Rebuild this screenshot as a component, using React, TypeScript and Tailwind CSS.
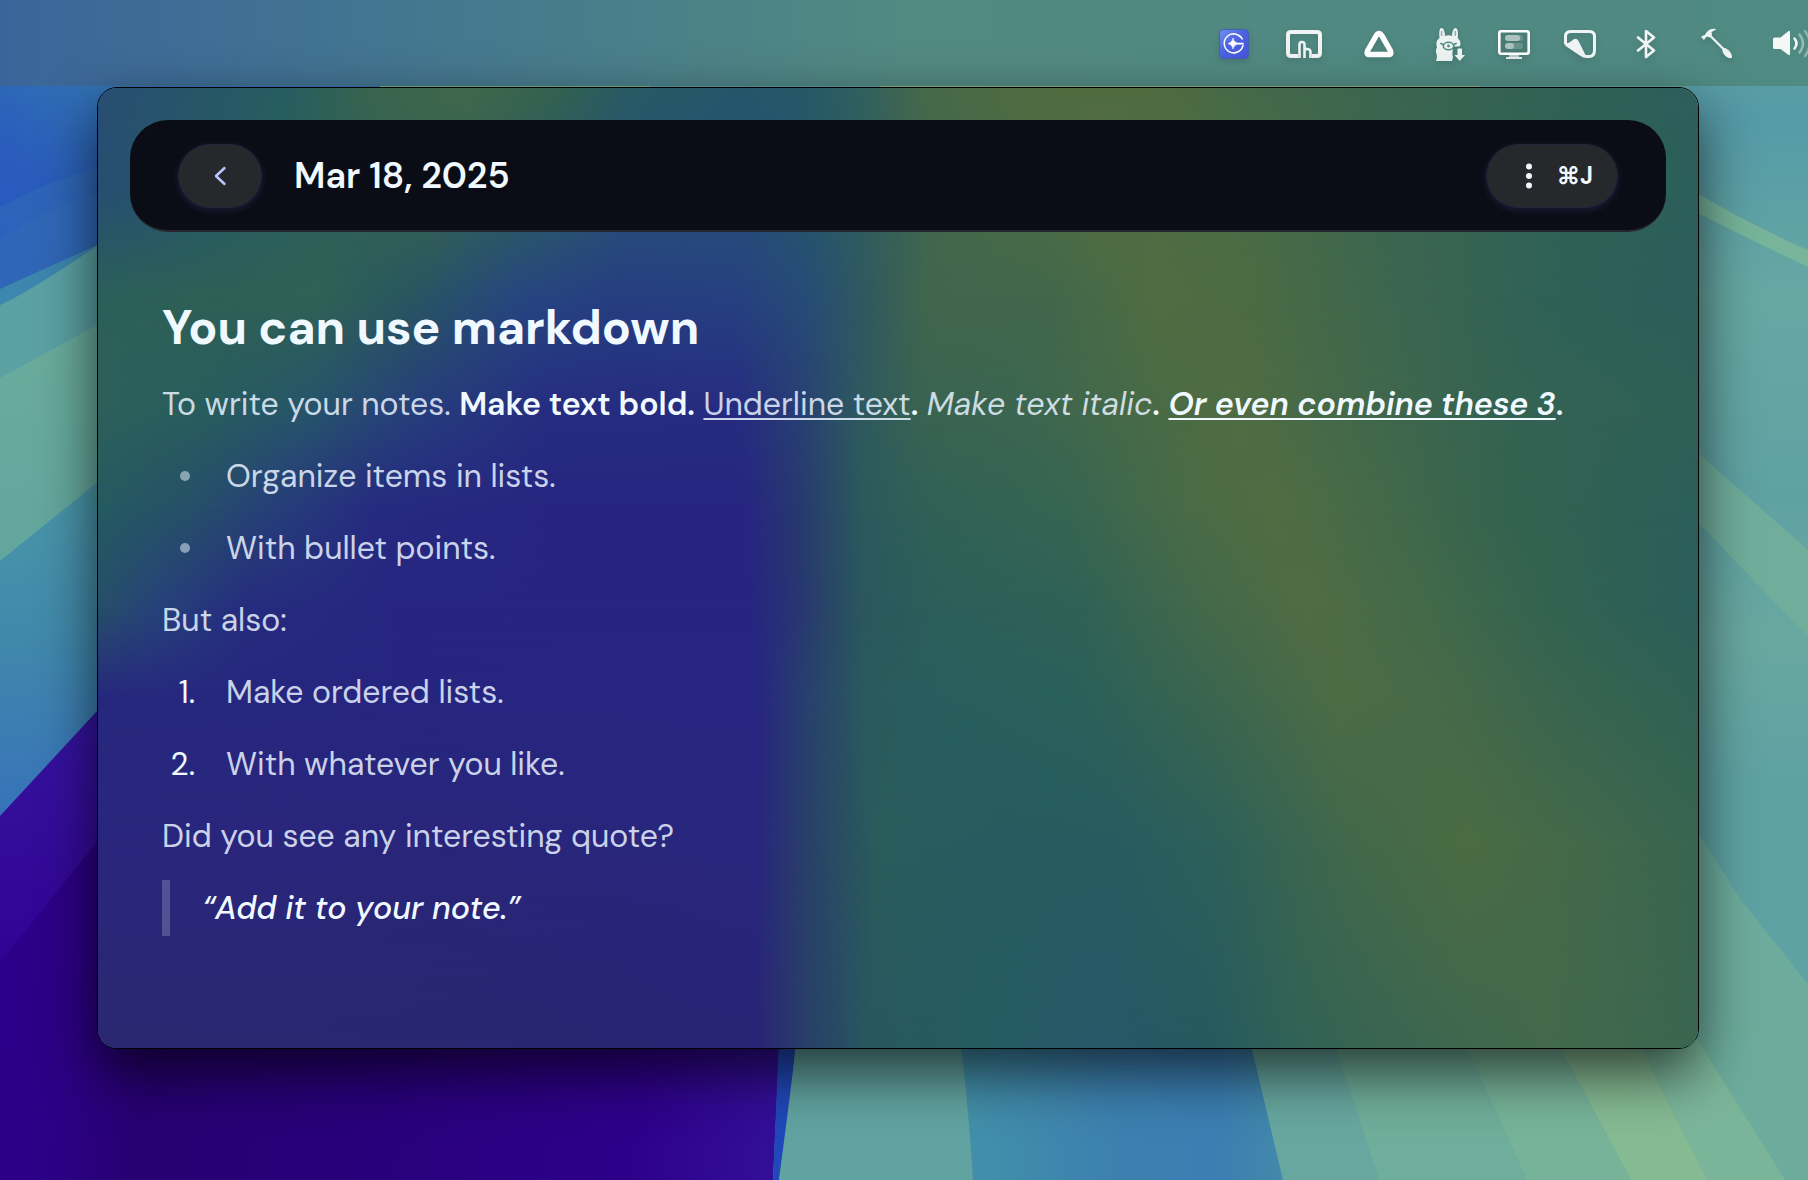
import React from "react";

type Stop = [number, string];

/* Colour rows of the frosted note window, blended across its width and height. */
const FROST: { y: number; stops: Stop[] }[] = [
  { y: 0, stops: [[0, "#284e74"], [100, "#275668"], [190, "#275d60"], [270, "#38644f"], [370, "#40684b"], [450, "#34624f"], [530, "#285a63"], [640, "#25566a"], [700, "#255868"], [760, "#2f5f60"], [830, "#47694a"], [950, "#506c40"], [1060, "#506c40"], [1160, "#44694a"], [1300, "#3a6550"], [1500, "#2f6055"], [1602, "#2d5f5c"]] },
  { y: 110, stops: [[0, "#274f70"], [100, "#265866"], [200, "#2b605b"], [330, "#366252"], [430, "#2c5b60"], [530, "#27507a"], [650, "#264e78"], [720, "#265668"], [780, "#335f5a"], [850, "#44684b"], [1000, "#506d42"], [1150, "#4a6b46"], [1300, "#3a6550"], [1480, "#2f6156"], [1602, "#2c5f5a"]] },
  { y: 210, stops: [[0, "#2b6059"], [120, "#2e6055"], [220, "#306155"], [310, "#28565f"], [420, "#264680"], [520, "#263e80"], [640, "#264080"], [710, "#264c76"], [770, "#30595e"], [830, "#41664d"], [950, "#41674b"], [1060, "#506d42"], [1160, "#4b6b43"], [1300, "#3c6650"], [1450, "#2f6156"], [1602, "#2c5e5b"]] },
  { y: 320, stops: [[0, "#2d605a"], [110, "#285d5d"], [210, "#26556a"], [320, "#263e7c"], [450, "#262d80"], [640, "#262c80"], [700, "#283e74"], [760, "#2d5860"], [820, "#396352"], [930, "#3c6650"], [1070, "#4a6b45"], [1140, "#506c43"], [1270, "#41684b"], [1400, "#356352"], [1602, "#2e6056"]] },
  { y: 420, stops: [[0, "#255a60"], [90, "#265068"], [180, "#263e7a"], [280, "#262a80"], [450, "#262680"], [650, "#262680"], [700, "#27386f"], [765, "#2b595d"], [840, "#316155"], [970, "#366552"], [1090, "#4a6b46"], [1180, "#506d43"], [1290, "#43694a"], [1420, "#32624f"], [1602, "#2c5f5a"]] },
  { y: 520, stops: [[0, "#264f68"], [60, "#26427a"], [150, "#262c7e"], [300, "#262680"], [655, "#262680"], [705, "#283870"], [765, "#2a575d"], [840, "#2c5f5a"], [980, "#2f6156"], [1110, "#44694a"], [1210, "#506c44"], [1320, "#446a49"], [1450, "#336350"], [1602, "#2b5e5a"]] },
  { y: 610, stops: [[0, "#26287e"], [300, "#262680"], [660, "#272680"], [710, "#28406e"], [770, "#2a5a5c"], [850, "#295e5e"], [980, "#2a605a"], [1110, "#3a654f"], [1240, "#4d6c45"], [1340, "#486a48"], [1480, "#376450"], [1602, "#2f6154"]] },
  { y: 760, stops: [[0, "#2a267e"], [350, "#29267a"], [660, "#28267e"], [710, "#294068"], [780, "#2a5c5c"], [900, "#275b60"], [1020, "#275b60"], [1120, "#2d605a"], [1250, "#41684b"], [1370, "#4b6c43"], [1500, "#42684b"], [1602, "#376550"]] },
  { y: 961, stops: [[0, "#2b2870"], [350, "#2a2670"], [660, "#292575"], [710, "#284068"], [775, "#28585f"], [880, "#255b60"], [1000, "#275868"], [1110, "#25595f"], [1200, "#316255"], [1330, "#3d6650"], [1450, "#43694b"], [1602, "#3a6650"]] },
];

function FrostedBackdrop() {
  return (
    <svg
      aria-hidden="true"
      className="absolute inset-0 h-full w-full"
      viewBox="0 0 1602 961"
      preserveAspectRatio="none"
    >
      <defs>
        {FROST.map((row, i) => (
          <linearGradient key={i} id={"row" + i} x1="0" x2="1" y1="0" y2="0">
            {row.stops.map(([x, c]) => (
              <stop key={x} offset={x / 1602} stopColor={c} />
            ))}
          </linearGradient>
        ))}
        {FROST.slice(1).map((row, i) => (
          <React.Fragment key={i}>
            <linearGradient
              id={"fade" + (i + 1)}
              gradientUnits="userSpaceOnUse"
              x1="0"
              x2="0"
              y1={FROST[i].y}
              y2={row.y}
            >
              <stop offset="0" stopColor="#fff" stopOpacity="0" />
              <stop offset="1" stopColor="#fff" />
            </linearGradient>
            <mask id={"mask" + (i + 1)} maskUnits="userSpaceOnUse" x="0" y="0" width="1602" height="961">
              <rect width="1602" height="961" fill={"url(#fade" + (i + 1) + ")"} />
            </mask>
          </React.Fragment>
        ))}
      </defs>
      {FROST.map((row, i) => (
        <rect
          key={i}
          y={i === 0 ? 0 : FROST[i - 1].y}
          width="1602"
          height={961 - (i === 0 ? 0 : FROST[i - 1].y)}
          fill={"url(#row" + i + ")"}
          mask={i === 0 ? undefined : "url(#mask" + i + ")"}
        />
      ))}
    </svg>
  );
}

function Wallpaper() {
  return (
    <svg
      aria-hidden="true"
      className="absolute inset-0 h-full w-full"
      viewBox="0 0 1808 1180"
      preserveAspectRatio="none"
    >
      <defs>
        <linearGradient id="wBlue" gradientUnits="userSpaceOnUse" x1="0" x2="110" y1="230" y2="90">
          <stop offset="0" stopColor="#2858bf" />
          <stop offset=".4" stopColor="#2a5dbc" />
          <stop offset="1" stopColor="#3273b4" />
        </linearGradient>
        <linearGradient id="wSea" x1="0" x2="0" y1="0" y2="1">
          <stop offset="0" stopColor="#4b98a8" />
          <stop offset=".45" stopColor="#4189ab" />
          <stop offset="1" stopColor="#3670bb" />
        </linearGradient>
        <linearGradient id="wPurple" x1="0" x2="0" y1="0" y2="1">
          <stop offset="0" stopColor="#35159e" />
          <stop offset="1" stopColor="#310094" />
        </linearGradient>
        <linearGradient id="wDeep" gradientUnits="userSpaceOnUse" x1="0" x2="790" y1="1060" y2="1120">
          <stop offset="0" stopColor="#2e008a" />
          <stop offset=".08" stopColor="#2c0084" />
          <stop offset=".18" stopColor="#270072" />
          <stop offset=".45" stopColor="#28007a" />
          <stop offset=".8" stopColor="#2e008a" />
          <stop offset="1" stopColor="#331099" />
        </linearGradient>
        <linearGradient id="wRight" x1="0" x2="0" y1="0" y2="1">
          <stop offset="0" stopColor="#64a3a2" />
          <stop offset=".1" stopColor="#559aa8" />
          <stop offset=".25" stopColor="#66a8a2" />
          <stop offset=".42" stopColor="#5fa2a3" />
          <stop offset=".54" stopColor="#69a8a0" />
          <stop offset=".66" stopColor="#5fa2a3" />
          <stop offset="1" stopColor="#5fa2a3" />
        </linearGradient>
        <linearGradient id="wGreen" x1="0" x2="0" y1="0" y2="1">
          <stop offset="0" stopColor="#6aac9c" />
          <stop offset="1" stopColor="#62a59e" />
        </linearGradient>
        <linearGradient id="wFloor" x1="0" x2="1" y1="0" y2="0">
          <stop offset="0" stopColor="#4390a9" />
          <stop offset=".5" stopColor="#3c80b0" />
          <stop offset=".8" stopColor="#3b7eb2" />
          <stop offset="1" stopColor="#4289aa" />
        </linearGradient>
      </defs>
      <rect width="1808" height="1180" fill="#5fa2a2" />
      <path d="M0 0H380V350H0Z" fill="url(#wBlue)" />
      <path d="M0 207Q50 180 110 164V320H0Z" fill="#3574b4" opacity=".4" />
      <path d="M0 240Q50 205 110 190V320H0Z" fill="#3a7ab0" opacity=".2" />
      <path d="M0 289L97 245V320H0Z" fill="#3d86ae" />
      <path d="M380 0H650V90H380Z" fill="#7bae85" />
      <path d="M650 0H880V90H650Z" fill="#5b99a5" />
      <path d="M880 0H1480V90H880Z" fill="#8fb37c" />
      <path d="M0 305Q30 292 110 237V500H0Z" fill="#5ba1a4" />
      <path d="M0 378L110 318V600H0Z" fill="url(#wGreen)" />
      <path d="M0 561L110 472V830H0Z" fill="url(#wSea)" />
      <path d="M0 816L110 697V1000H0Z" fill="url(#wPurple)" />
      <path d="M0 962L110 826L790 826L773 1180H0Z" fill="url(#wDeep)" />
      <path d="M779 1040H797L779 1180H773Z" fill="#2048ba" />
      <path d="M796 1040H960Q968 1100 973 1180H779Q790 1110 796 1040Z" fill="#61a3a0" />
      <path d="M960 1040H1250L1283 1180H973Q968 1100 960 1040Z" fill="url(#wFloor)" />
      <path d="M1250 1040H1333L1379 1180H1283Z" fill="#67a79f" />
      <path d="M1333 1040H1463L1527 1180H1379Z" fill="#6fae9a" />
      <path d="M1463 1040H1556L1631 1180H1527Z" fill="#77b399" />
      <path d="M1690 0H1808V1180H1690Z" fill="url(#wRight)" />
      <path d="M1690 189Q1750 225 1808 250V267Q1750 240 1690 209Z" fill="#77b49a" />
      <path d="M1690 446L1808 550V637L1690 514Z" fill="#70ae9b" />
      <path d="M1690 820Q1712 855 1741 900L1808 984V1180H1690Z" fill="#6dac9c" />
      <path d="M1637 1040H1697L1785 1180H1707Z" fill="#7bb599" />
      <path d="M1690 1028L1785 1180H1700Z" fill="#7bb599" />
      <path d="M1556 1040H1637L1707 1180H1631Z" fill="#85ba93" />
    </svg>
  );
}

function SparkIcon() {
  return (
    <svg width="30" height="30" viewBox="0 0 30 30">
      <defs>
        <linearGradient id="spark" x1="0" x2="1" y1="0" y2="1">
          <stop offset="0" stopColor="#7390ee" />
          <stop offset=".45" stopColor="#4d63e2" />
          <stop offset="1" stopColor="#4655d6" />
        </linearGradient>
      </defs>
      <rect x=".5" y=".5" width="29" height="29" rx="4" fill="url(#spark)" stroke="#4160b4" />
      <path d="M23.200 10A9.500 9.500 0 1 0 24 16.500" fill="none" stroke="#fff" strokeWidth="1.500" strokeLinecap="round" />
      <path d="M23.200 10Q19 4.500 12 5.700Q15 4.800 18 6.500Q21 8 23.200 10Z" fill="#fff" />
      <path d="M24 16.500Q22 23 15 23.500Q11 23.700 8 21Q12 25 17 24Q23 22 24 16.500Z" fill="#fff" />
      <path d="M14 9Q14.600 13.200 18.500 14H24.400V15.200H18.500Q14.600 16 14 20Q13.400 15.800 9.200 14.600Q13.400 13.400 14 9Z" fill="#fff" stroke="#fff" strokeWidth=".6" strokeLinejoin="round" />
    </svg>
  );
}

function TouchIcon() {
  return (
    <svg width="36" height="28" viewBox="0 0 36 28" fill="none">
      <path d="M12 26H5Q2 26 2 23V5Q2 2 5 2H31Q34 2 34 5V23Q34 26 31 26H26" stroke="#eff3f3" strokeWidth="4" />
      <path d="M13.500 28V14.500Q13.500 12 16 12Q18.500 12 18.500 14.500V28M18.500 28V20.500Q19 18.500 21.500 19Q24.500 19.500 24.500 22V28" stroke="#eff3f3" strokeWidth="2.600" />
    </svg>
  );
}

function TriangleIcon() {
  return (
    <svg width="30" height="28" viewBox="0 0 30 28" fill="none">
      <path d="M15 3.500Q16.500 3.500 18 6L26.300 20.500Q28 24.500 24.500 24.500H5.500Q2 24.500 3.700 20.500L12 6Q13.500 3.500 15 3.500Z" stroke="#fff" strokeWidth="5.500" strokeLinejoin="round" />
    </svg>
  );
}

function LlamaIcon() {
  return (
    <svg width="29" height="33" viewBox="0 0 29 33">
      <path
        d="M3.500 10Q2.500 0 5.500 0Q8.500 0 9 8Q12.500 6.500 16 8Q16.500 0 19.500 0Q22.500 0 21.800 10Q25 13 24.300 17L23.500 18.500H18.500Q16.500 19 16.500 25Q16 27 17 29L16 33H0Q1.500 29 .5 26Q-.8 22 1 19.500Q-1 13 3.500 10Z"
        fill="#edf3f1"
      />
      <path d="M5.600 3V8M19.300 3V8" stroke="#8fb3ab" strokeWidth="1.500" />
      <ellipse cx="12.500" cy="18" rx="5.200" ry="3.700" fill="#edf3f1" stroke="#528c82" strokeWidth="1.600" />
      <path d="M5 15.500L7 16.500M20 15.500L18 16.500" stroke="#528c82" strokeWidth="1.800" strokeLinecap="round" />
      <circle cx="12.500" cy="18" r="1.400" fill="#528c82" />
      <path d="M21.500 20.500H26V27H29L23.700 33L18.500 27H21.500Z" fill="#edf3f1" />
    </svg>
  );
}

function MonitorIcon() {
  return (
    <svg width="32" height="29" viewBox="0 0 32 29">
      <rect x="1.300" y="1.300" width="29.400" height="22.400" rx="2" fill="#48796f" fillOpacity=".5" stroke="#fff" strokeWidth="2.600" />
      <rect x="7" y="5" width="18" height="6" rx="3" fill="#fff" opacity=".18" />
      <rect x="7" y="5" width="15" height="6" rx="3" fill="#fff" opacity=".45" />
      <rect x="7" y="13" width="18" height="6" rx="3" fill="#fff" opacity=".18" />
      <rect x="7" y="13" width="9" height="6" rx="3" fill="#fff" opacity=".45" />
      <rect x="11" y="25" width="10" height="2" fill="#fff" opacity=".6" />
      <rect x="8" y="27" width="16" height="2" rx=".5" fill="#fff" opacity=".85" />
    </svg>
  );
}

function FoldIcon() {
  return (
    <svg width="32" height="28" viewBox="0 0 32 28">
      <path
        d="M1.500 14V6.500Q1.500 1.500 6.500 1.500H25.500Q30.500 1.500 30.500 6.500V20Q30.500 26.500 25 26.500H22Q19 26.500 17 24.500L2 14.500"
        fill="none"
        stroke="#eef4f3"
        strokeWidth="3"
      />
      <path d="M0 14Q6 13 9.500 9.500Q12.500 7.500 14.500 11L22.500 27L18 26Z" fill="#eef4f3" />
    </svg>
  );
}

function BluetoothIcon() {
  return (
    <svg width="20" height="30" viewBox="0 0 20 30" fill="none">
      <path d="M2 8.500L18 21.500L10 28V2L18 8.500L2 21.500" stroke="#f2f7f6" strokeWidth="2.600" strokeLinecap="round" strokeLinejoin="round" />
    </svg>
  );
}

function HammerIcon() {
  return (
    <svg width="32" height="32" viewBox="0 0 32 32">
      <path d="M0 9L2 7.500Q4 8 5 5Q9 -.5 15 1L14.500 2Q11.500 2.500 10.500 4.500L11 7L8.500 9.500L6.500 8.500Q4.500 9 4 10.500L3 12Z" fill="#edf4f2" />
      <path d="M8.500 7L22 20.500" stroke="#edf4f2" strokeWidth="2.200" />
      <path d="M21 19.500Q25 19.500 28 22.500Q31.500 26.500 31 29.500Q28.500 31.500 25 28.500Q21 25 21 19.500Z" fill="#edf4f2" />
    </svg>
  );
}

function VolumeIcon() {
  return (
    <svg width="42" height="30" viewBox="0 0 42 30" fill="none">
      <path d="M1.500 8.500H7.500L15.500 2Q17 1.500 17 3V25Q17 26.500 15.500 26L7.500 20H1.500Q0 20 0 18.500V10Q0 8.500 1.500 8.500Z" fill="#f3f8f7" />
      <path d="M21.500 9.500Q25.500 14.500 21.500 19.500" stroke="#f3f8f7" strokeWidth="2.500" strokeLinecap="round" />
      <path d="M26.500 5.500Q33.500 14.500 26.500 23.500" stroke="#fff" strokeOpacity=".4" strokeWidth="2.500" strokeLinecap="round" />
      <path d="M32 2Q41.500 14.500 32 27" stroke="#fff" strokeOpacity=".35" strokeWidth="2.500" strokeLinecap="round" />
    </svg>
  );
}

function MenuItem({ label, width, children }: { label: string; width: string; children: React.ReactNode }) {
  return (
    <button type="button" aria-label={label} className={"flex h-full shrink-0 items-center justify-center drop-shadow-md " + width}>
      {children}
    </button>
  );
}

function MenuBar() {
  return (
    <header className="relative flex h-[86px] items-center justify-end overflow-hidden bg-linear-to-r from-[#3b659a] via-[#528981] via-50% to-[#4f8a83] pt-0.5">
      <MenuItem label="Assistant" width="w-[66px]"><SparkIcon /></MenuItem>
      <MenuItem label="Touch bar" width="w-[74px]"><TouchIcon /></MenuItem>
      <MenuItem label="Launcher" width="w-[76px]"><TriangleIcon /></MenuItem>
      <MenuItem label="Llama download" width="w-[66px]"><LlamaIcon /></MenuItem>
      <MenuItem label="Display" width="w-[62px]"><MonitorIcon /></MenuItem>
      <MenuItem label="Notes" width="w-[70px]"><FoldIcon /></MenuItem>
      <MenuItem label="Bluetooth" width="w-[62px]"><BluetoothIcon /></MenuItem>
      <MenuItem label="Tools" width="w-[80px]"><HammerIcon /></MenuItem>
      <button type="button" aria-label="Volume" className="flex h-full w-[51px] shrink-0 items-center overflow-hidden pl-4">
        <span className="shrink-0"><VolumeIcon /></span>
      </button>
    </header>
  );
}

function NoteHeader() {
  return (
    <header className="flex items-center rounded-[38px] border-b-2 border-[#27262d] bg-[#0b0d16] px-12 pt-6 pb-[22px]">
      <button
        type="button"
        aria-label="Back"
        className="flex h-16 w-[84px] items-center justify-center rounded-[32px] border border-[#22233c] bg-[#27282c] shadow-[0_2px_5px_1px_#191930]"
      >
        <svg width="14" height="22" viewBox="0 0 14 22" fill="none">
          <path d="M11.500 3L3 11L11.500 19" stroke="#b9c4fb" strokeWidth="2.500" strokeLinecap="round" strokeLinejoin="round" />
        </svg>
      </button>
      <h1 className="ml-8 flex-1 text-[36px] leading-[44px] font-semibold text-[#f0f9ff]">Mar 18, 2025</h1>
      <button
        type="button"
        aria-label="Note actions ⌘J"
        className="flex h-16 items-center gap-6 rounded-[32px] border border-[#22233c] bg-[#27282c] pr-6 pl-[38px] text-[24px] font-bold text-[#f0f9ff] shadow-[0_2px_5px_1px_#191930]"
      >
        <svg width="8" height="26" viewBox="0 0 8 26" fill="currentColor">
          <circle cx="4" cy="3.500" r="3" />
          <circle cx="4" cy="13" r="3" />
          <circle cx="4" cy="22.500" r="3" />
        </svg>
        <span>⌘J</span>
      </button>
    </header>
  );
}

function Note() {
  return (
    <article className="flex flex-col gap-4 px-8 pt-[68px] pb-20 text-[32px] leading-[56px] text-[#e9f2ff]/85">
      <h2 className="mb-1 text-[48px] font-bold text-[#f0f9ff]">You can use markdown</h2>
      <p>
        To write your notes. <strong className="font-semibold text-[#f0f9ff]">Make text bold.</strong>{" "}
        <u className="decoration-2 underline-offset-3">Underline text</u>
        <strong className="font-semibold text-[#f0f9ff]">.</strong> <em>Make text italic</em>
        <strong className="font-semibold text-[#f0f9ff]">.</strong>{" "}
        <strong className="font-semibold text-[#f0f9ff]">
          <em className="underline decoration-2 underline-offset-3">Or even combine these 3</em>.
        </strong>
      </p>
      <ul className="flex flex-col gap-4">
        {["Organize items in lists.", "With bullet points."].map((t) => (
          <li key={t} className="flex items-center">
            <span className="mr-9 ml-[18px] h-[10px] w-[10px] rounded-full bg-[#eef5ff]/50" />
            {t}
          </li>
        ))}
      </ul>
      <p>But also:</p>
      <ol className="flex flex-col gap-4">
        {["Make ordered lists.", "With whatever you like."].map((t, i) => (
          <li key={t} className="flex">
            <span className="w-16 pr-[31px] text-right text-[#f0f9ff]">{i + 1}.</span>
            {t}
          </li>
        ))}
      </ol>
      <p>Did you see any interesting quote?</p>
      <blockquote className="border-l-8 border-white/20 pl-8 font-medium text-[#f0f9ff] italic">
        “Add it to your note.”
      </blockquote>
    </article>
  );
}

export default function App() {
  return (
    <div className="relative flex min-h-screen flex-col overflow-hidden font-['DM_Sans',Inter,'DejaVu_Sans',sans-serif]">
      <Wallpaper />
      <MenuBar />
      <main className="relative mt-px mr-[109px] ml-[97px] overflow-hidden rounded-[20px] border border-black shadow-[0_24px_56px_rgba(0,0,0,0.65)]">
        <FrostedBackdrop />
        <div className="relative p-8">
          <NoteHeader />
          <Note />
        </div>
      </main>
    </div>
  );
}
